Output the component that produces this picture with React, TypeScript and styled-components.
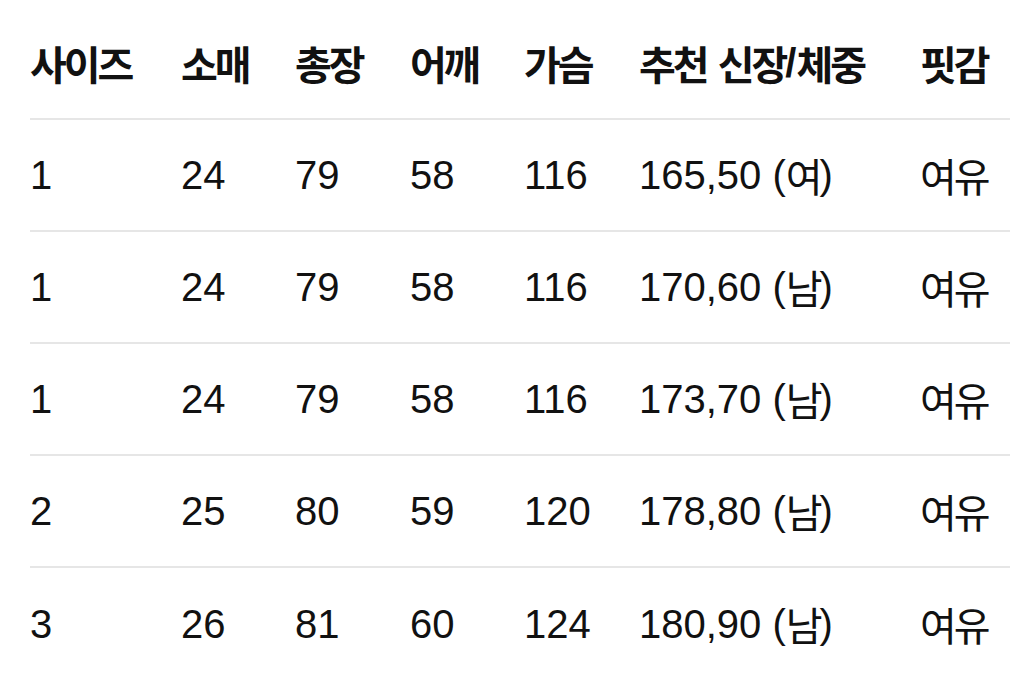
import React from "react";
import styled, { createGlobalStyle } from "styled-components";

const Global = createGlobalStyle`
  html, body { margin: 0; padding: 0; background: #ffffff; }
  body {
    font-family: "Liberation Sans", Arial, "Noto Sans CJK KR", sans-serif;
    color: #111111;
  }
`;

const Page = styled.div`
  padding: 8px 14px 0 30px;
`;

const Table = styled.div`
  display: grid;
  grid-template-columns: 151px 114px 115px 114px 115px 281px 1fr;
`;

const Row = styled.div<{ $last?: boolean }>`
  display: contents;
  & > div {
    border-bottom: ${(p) => (p.$last ? "none" : "2px solid #e6e6e6")};
  }
`;

const Cell = styled.div<{ $head?: boolean }>`
  height: 112px;
  box-sizing: border-box;
  display: flex;
  align-items: center;
  font-size: 40px;
  font-weight: ${(p) => (p.$head ? 700 : 400)};
  white-space: nowrap;
  padding-bottom: ${(p) => (p.$head ? "0" : "0")};
`;

const Ko = styled.span`
  font-family: "Noto Sans CJK KR", sans-serif;
  letter-spacing: -3px;
`;

const header = ["사이즈", "소매", "총장", "어깨", "가슴", "추천 신장/체중", "핏감"];

const rows: [string, string, string, string, string, string, string, string][] = [
  ["1", "24", "79", "58", "116", "165,50", "여", "여유"],
  ["1", "24", "79", "58", "116", "170,60", "남", "여유"],
  ["1", "24", "79", "58", "116", "173,70", "남", "여유"],
  ["2", "25", "80", "59", "120", "178,80", "남", "여유"],
  ["3", "26", "81", "60", "124", "180,90", "남", "여유"],
];

const renderHead = (t: string) => {
  if (t === "추천 신장/체중") {
    return (
      <>
        <Ko>추천</Ko>&nbsp;<Ko>신장</Ko>/<Ko>체중</Ko>
      </>
    );
  }
  return <Ko>{t}</Ko>;
};

export default function App() {
  return (
    <>
      <Global />
      <Page>
        <Table>
          <Row>
            {header.map((h) => (
              <Cell key={h} $head>
                {renderHead(h)}
              </Cell>
            ))}
          </Row>
          {rows.map((r, i) => (
            <Row key={i} $last={i === rows.length - 1}>
              <Cell>{r[0]}</Cell>
              <Cell>{r[1]}</Cell>
              <Cell>{r[2]}</Cell>
              <Cell>{r[3]}</Cell>
              <Cell>{r[4]}</Cell>
              <Cell>
                {r[5]}&nbsp;(<Ko>{r[6]}</Ko>)
              </Cell>
              <Cell>
                <Ko>{r[7]}</Ko>
              </Cell>
            </Row>
          ))}
        </Table>
      </Page>
    </>
  );
}
